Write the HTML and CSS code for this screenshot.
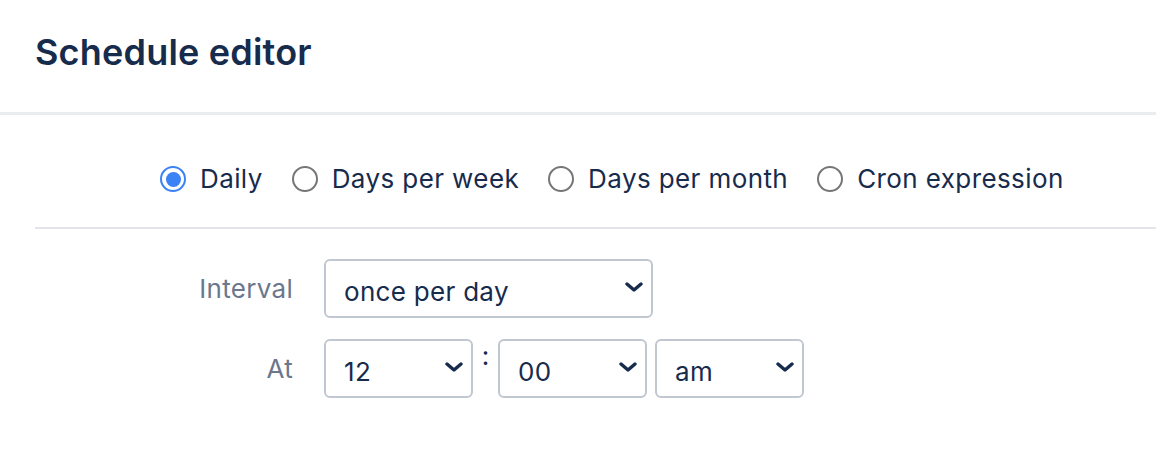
FILE: index.html
```html
<!DOCTYPE html>
<html>
<head>
<meta charset="utf-8">
<link rel="stylesheet" href="styles.css">
</head>
<body>
<header class="header">
  <h1 class="title">Schedule editor</h1>
</header>
<section class="modes">
  <label class="radio"><span class="radio-circle checked"></span><span class="radio-label">Daily</span></label>
  <label class="radio"><span class="radio-circle"></span><span class="radio-label">Days per week</span></label>
  <label class="radio"><span class="radio-circle"></span><span class="radio-label">Days per month</span></label>
  <label class="radio"><span class="radio-circle"></span><span class="radio-label">Cron expression</span></label>
</section>
<section class="form">
  <div class="field-label">Interval</div>
  <div class="field">
    <div class="select select-wide"><span>once per day</span>
      <svg class="chev" viewBox="0 0 18 10" width="18" height="10"><path d="M2 2 L9 8 L16 2" fill="none" stroke="#172b4d" stroke-width="3.4" stroke-linecap="round" stroke-linejoin="round"/></svg>
    </div>
  </div>
  <div class="field-label">At</div>
  <div class="field">
    <div class="select select-small"><span>12</span>
      <svg class="chev" viewBox="0 0 18 10" width="18" height="10"><path d="M2 2 L9 8 L16 2" fill="none" stroke="#172b4d" stroke-width="3.4" stroke-linecap="round" stroke-linejoin="round"/></svg>
    </div>
    <span class="colon">:</span>
    <div class="select select-small"><span>00</span>
      <svg class="chev" viewBox="0 0 18 10" width="18" height="10"><path d="M2 2 L9 8 L16 2" fill="none" stroke="#172b4d" stroke-width="3.4" stroke-linecap="round" stroke-linejoin="round"/></svg>
    </div>
    <div class="select select-small ampm"><span>am</span>
      <svg class="chev" viewBox="0 0 18 10" width="18" height="10"><path d="M2 2 L9 8 L16 2" fill="none" stroke="#172b4d" stroke-width="3.4" stroke-linecap="round" stroke-linejoin="round"/></svg>
    </div>
  </div>
</section>
</body>
</html>
```
FILE: styles.css
```css
* { box-sizing: border-box; }
body {
  margin: 0;
  font-family: Inter, "Noto Sans", sans-serif;
  color: #172b4d;
  background: #fff;
}
.header {
  height: 115px;
  border-bottom: 3px solid #ebecf0;
  padding: 31px 0 0 35px;
}
.title {
  margin: 0;
  font-size: 36px;
  line-height: 42px;
  font-weight: 600;
  letter-spacing: 0.2px;
}
.modes {
  margin-left: 35px;
  padding: 51px 0 35px 125px;
  border-bottom: 2px solid #e4e5ea;
  display: flex;
  align-items: center;
  gap: 29px;
}
.radio {
  display: flex;
  align-items: center;
  gap: 14px;
}
.radio-circle {
  width: 26px;
  height: 26px;
  border-radius: 50%;
  border: 2px solid #767676;
  display: flex;
  align-items: center;
  justify-content: center;
  flex: none;
}
.radio-circle.checked {
  border-color: #3b82f6;
}
.radio-circle.checked::after {
  content: "";
  width: 15px;
  height: 15px;
  border-radius: 50%;
  background: #3b82f6;
}
.radio-label {
  font-size: 26px;
  line-height: 26px;
  letter-spacing: 0.4px;
}
.form {
  display: grid;
  grid-template-columns: 258px auto;
  column-gap: 31px;
  row-gap: 21px;
  padding: 30px 0 0 35px;
  align-items: center;
}
.field-label {
  text-align: right;
  font-size: 26px;
  letter-spacing: 0.3px;
  color: #6b778c;
}
.field {
  display: flex;
  align-items: flex-start;
}
.select {
  height: 59px;
  border: 2px solid #c1c7d0;
  border-radius: 6px;
  display: flex;
  align-items: center;
  justify-content: space-between;
  padding: 5px 8px 0 18px;
  font-size: 26px;
  letter-spacing: 0.3px;
}
.select-wide { width: 329px; }
.select-small { width: 149px; }
.chev { margin-top: -8px; flex: none; }
.colon {
  width: 25px;
  text-align: center;
  font-size: 26px;
  line-height: 26px;
  padding-top: 4px;
}
.ampm { margin-left: 8px; }
```
